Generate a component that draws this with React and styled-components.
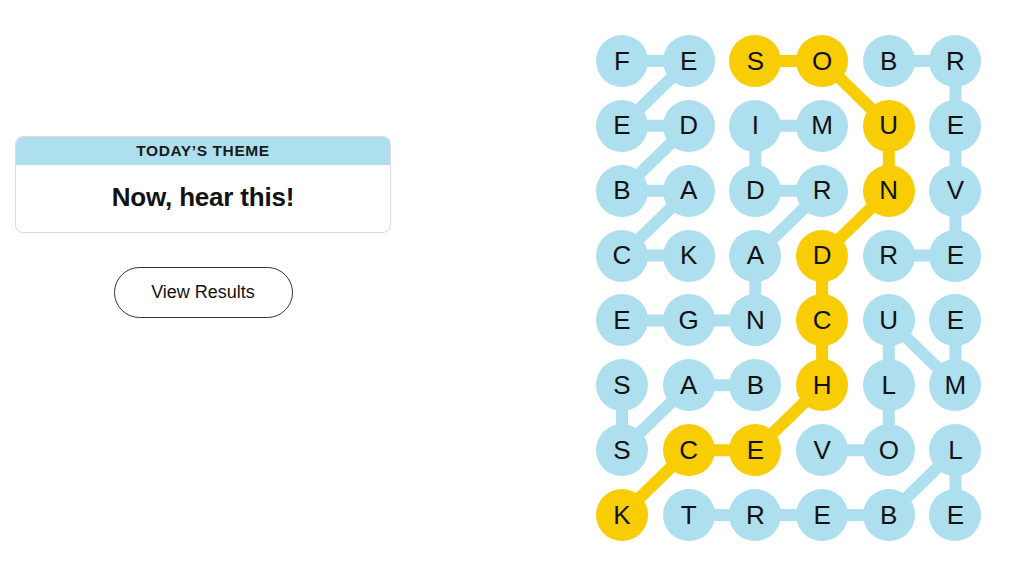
import React from 'react'
import styled, { createGlobalStyle } from 'styled-components'

const GlobalStyle = createGlobalStyle`
  * { box-sizing: border-box; }
  html, body { margin: 0; padding: 0; background: #fff; }
  body { font-family: "Liberation Sans", Arial, sans-serif; color: #121212; }
`

const BLUE = '#aedfee'
const YELLOW = '#f8cd05'
const CELL = 52
const COL_PITCH = 66.7
const ROW_PITCH = 64.86

const letters = [
  'FESOBR',
  'EDIMUE',
  'BADRNV',
  'CKADRE',
  'EGNCUE',
  'SABHLM',
  'SCEVOL',
  'KTREBE',
]

const spangram = [[0, 2], [0, 3], [1, 4], [2, 4], [3, 3], [4, 3], [5, 3], [6, 2], [6, 1], [7, 0]]

// blue words, each as a chain of [row, col]
const words = [
  [[0, 0], [0, 1], [1, 0], [1, 1], [2, 0], [2, 1], [3, 0], [3, 1]], // FEEDBACK
  [[1, 3], [1, 2], [2, 2], [2, 3], [3, 2], [4, 2], [4, 1], [4, 0]], // MIDRANGE
  [[3, 4], [3, 5], [2, 5], [1, 5], [0, 5], [0, 4]], // REVERB
  [[6, 3], [6, 4], [5, 4], [4, 4], [5, 5], [4, 5]], // VOLUME
  [[5, 2], [5, 1], [6, 0], [5, 0]], // BASS
  [[7, 1], [7, 2], [7, 3], [7, 4], [6, 5], [7, 5]], // TREBLE
]

const isFound = (r, c) => spangram.some(([a, b]) => a === r && b === c)
const cx = (c) => CELL / 2 + c * COL_PITCH
const cy = (r) => CELL / 2 + r * ROW_PITCH
const toPoints = (chain) => chain.map(([r, c]) => `${cx(c)},${cy(r)}`).join(' ')

const Page = styled.div`
  display: flex;
  align-items: flex-start;
  width: 1024px;
  height: 576px;
  padding: 35px 0 0 15px;
`

const LeftPanel = styled.div`
  width: 376px;
  margin-top: 101px;
  display: flex;
  flex-direction: column;
  align-items: center;
`

const ThemeCard = styled.div`
  width: 100%;
  border: 1px solid #dcdcdc;
  border-radius: 8px;
  overflow: hidden;
  background: #fff;
`

const ThemeHeader = styled.div`
  height: 28px;
  background: ${BLUE};
  display: flex;
  align-items: center;
  justify-content: center;
  font-size: 15.5px;
  font-weight: 700;
  letter-spacing: 0.6px;
  color: #1a1a1a;
`

const ThemeTitle = styled.div`
  height: 67px;
  display: flex;
  align-items: center;
  justify-content: center;
  font-size: 26px;
  font-weight: 700;
  letter-spacing: -0.2px;
  color: #121212;
  padding-bottom: 2px;
`

const ResultsButton = styled.button`
  margin-top: 34px;
  width: 179px;
  height: 51px;
  border: 1px solid #333;
  border-radius: 26px;
  background: #fff;
  font-family: "Liberation Sans", Arial, sans-serif;
  font-size: 18px;
  color: #121212;
  cursor: pointer;
`

const Board = styled.div`
  position: relative;
  margin-left: 205px;
  width: ${CELL + 5 * COL_PITCH}px;
  height: ${CELL + 7 * ROW_PITCH}px;
`

const Links = styled.svg`
  position: absolute;
  left: 0;
  top: 0;
  width: 100%;
  height: 100%;
  overflow: visible;
`

const Grid = styled.div`
  position: relative;
  display: grid;
  grid-template-columns: repeat(6, ${CELL}px);
  grid-template-rows: repeat(8, ${CELL}px);
  column-gap: ${COL_PITCH - CELL}px;
  row-gap: ${ROW_PITCH - CELL}px;
`

const Letter = styled.div`
  width: ${CELL}px;
  height: ${CELL}px;
  border-radius: 50%;
  background: ${(p) => (p.$found ? YELLOW : BLUE)};
  display: flex;
  align-items: center;
  justify-content: center;
  font-size: 26px;
  color: #121212;
`

const App = () => {
  return (
    <>
      <GlobalStyle />
      <Page>
        <LeftPanel>
          <ThemeCard>
            <ThemeHeader>TODAY’S THEME</ThemeHeader>
            <ThemeTitle>Now, hear this!</ThemeTitle>
          </ThemeCard>
          <ResultsButton>View Results</ResultsButton>
        </LeftPanel>

        <Board>
          <Links>
            {words.map((w, i) => (
              <polyline key={i} points={toPoints(w)} fill="none" stroke={BLUE} strokeWidth="12" strokeLinejoin="round" />
            ))}
            <polyline points={toPoints(spangram)} fill="none" stroke={YELLOW} strokeWidth="12" strokeLinejoin="round" />
          </Links>
          <Grid>
            {letters.map((row, r) =>
              row.split('').map((ch, c) => (
                <Letter key={`${r}-${c}`} $found={isFound(r, c)}>
                  {ch}
                </Letter>
              ))
            )}
          </Grid>
        </Board>
      </Page>
    </>
  )
}

export default App
